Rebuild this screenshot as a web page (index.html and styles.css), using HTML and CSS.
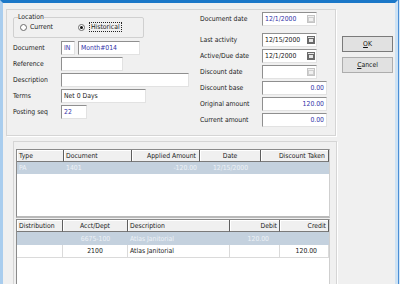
FILE: index.html
```html
<!DOCTYPE html>
<html lang="en">
<head>
  <meta charset="UTF-8" />
  <title>Apply Document</title>
  <link rel="stylesheet" href="styles.css">
</head>
<body>
  <div class="frame">
    <div class="window">
      <div class="main">
        <div class="panel top-panel">
          <div class="left-col">
            <fieldset class="location">
              <legend>Location</legend>
              <div class="radios">
                <span class="radio"></span><span class="radio-text">Current</span>
                <span class="radio checked second"></span><span class="radio-text focus">Historical</span>
              </div>
            </fieldset>

            <div class="form-rows">
              <span class="label">Document</span>
              <div class="pair">
                <span class="field blue w-in">IN</span>
                <span class="field blue w-ref">Month#014</span>
              </div>
              <span class="label">Reference</span>
              <span class="field w-ref"></span>
              <span class="label">Description</span>
              <span class="field w-desc"></span>
              <span class="label">Terms</span>
              <span class="field w-terms">Net 0 Days</span>
              <span class="label">Posting seq</span>
              <span class="field blue w-seq">22</span>
            </div>
          </div>

          <div class="right-col">
            <span class="label first">Document date</span>
            <span class="field date blue first">12/1/2000<span class="cal off"></span></span>
            <span class="label">Last activity</span>
            <span class="field date">12/15/2000<span class="cal"></span></span>
            <span class="label">Active/Due date</span>
            <span class="field date">12/1/2000<span class="cal"></span></span>
            <span class="label">Discount date</span>
            <span class="field date"><span class="cal off"></span></span>
            <span class="label">Discount base</span>
            <span class="field amount blue">0.00</span>
            <span class="label">Original amount</span>
            <span class="field amount blue">120.00</span>
            <span class="label">Current amount</span>
            <span class="field amount blue">0.00</span>
          </div>
        </div>

        <div class="panel bottom-panel">
          <div class="grid grid-apply">
            <div class="row head">
              <span>Type</span>
              <span>Document</span>
              <span class="r">Applied Amount</span>
              <span class="c">Date</span>
              <span class="r">Discount Taken</span>
            </div>
            <div class="row selected">
              <span>PA</span>
              <span>1401</span>
              <span class="r">-120.00</span>
              <span class="c">12/15/2000</span>
              <span></span>
            </div>
          </div>

          <div class="grid grid-dist">
            <div class="row head">
              <span>Distribution</span>
              <span class="c">Acct/Dept</span>
              <span>Description</span>
              <span class="r">Debit</span>
              <span class="r">Credit</span>
            </div>
            <div class="row selected">
              <span></span>
              <span class="c">6675-100</span>
              <span>Atlas Janitorial</span>
              <span class="r num">120.00</span>
              <span class="r num"></span>
            </div>
            <div class="row">
              <span></span>
              <span class="c">2100</span>
              <span>Atlas Janitorial</span>
              <span class="r num"></span>
              <span class="r num">120.00</span>
            </div>
          </div>
        </div>
      </div>

      <div class="side">
        <button class="btn default"><u>O</u>K</button>
        <button class="btn"><u>C</u>ancel</button>
      </div>
    </div>
  </div>
</body>
</html>
```

FILE: styles.css
```css
* {
  box-sizing: border-box;
}

body {
  margin: 0;
  width: 400px;
  height: 284px;
  overflow: hidden;
  background: #d6e7f6;
  font-family: "DejaVu Sans Condensed", "DejaVu Sans", sans-serif;
  font-stretch: semi-condensed;
  font-size: 6.8px;
  color: #1a1a1a;
}

.frame {
  width: 399px;
  height: 284px;
  border-right: 1px solid #4a8ed5;
}

.window {
  display: flex;
  height: 284px;
  background: #f0f0f0;
  border-top: 3px solid #1b78c8;
  border-left: 3px solid #a9cdee;
  border-right: 3px solid #cde2f4;
}

.main {
  width: 334px;
  padding: 6px 0 0 3px;
  display: flex;
  flex-direction: column;
  min-height: 0;
}

.panel {
  border: 1px solid #d5d5d5;
  box-shadow: 1px 1px 0 #fff;
}

/* upper form */
.top-panel {
  flex-shrink: 0;
  width: 330px;
  height: 127px;
  display: flex;
}

.left-col {
  width: 183px;
  padding-left: 6px;
}

.location {
  margin: 3px 0 0;
  padding: 0 4px;
  width: 131px;
  height: 25px;
  border: 1px solid #d0d0d0;
  border-radius: 2px;
}

.location legend {
  padding: 0;
  line-height: 8px;
}

.radios {
  display: flex;
  align-items: center;
  height: 10px;
  margin-top: 1px;
}

.radio {
  width: 7px;
  height: 7px;
  margin-left: 2px;
  border: 1px solid #6b6b6b;
  border-radius: 50%;
  background: #fff;
  display: flex;
  align-items: center;
  justify-content: center;
}

.radio.second {
  margin-left: 25px;
}

.radio.checked::after {
  content: "";
  width: 3px;
  height: 3px;
  border-radius: 50%;
  background: #111;
}

.radio-text {
  margin-left: 3px;
  line-height: 8px;
}

.radio-text.focus {
  margin-left: 4px;
  padding: 0 1px;
  border: 1px dotted #222;
}

.form-rows {
  margin-top: 3px;
  display: grid;
  grid-template-columns: 48px 1fr;
  grid-auto-rows: 14px;
  row-gap: 2px;
  align-items: center;
}

.label {
  white-space: nowrap;
}

.pair {
  display: flex;
  gap: 3px;
}

.field {
  display: flex;
  align-items: center;
  height: 14px;
  padding: 0 2px;
  background: #fff;
  border: 1px solid;
  border-color: #8f8f8f #e2e2e2 #e2e2e2 #8f8f8f;
  white-space: nowrap;
}

.blue {
  color: #3434a8;
}

.w-in { width: 14px; }
.w-ref { width: 62px; }
.w-desc { width: 128px; }
.w-terms { width: 85px; }
.w-seq { width: 26px; }

.right-col {
  margin-top: 2px;
  padding-left: 10px;
  width: 137px;
  display: grid;
  grid-template-columns: 1fr auto;
  grid-template-rows: 19px;
  grid-auto-rows: 14px;
  row-gap: 2px;
  align-items: center;
  align-content: start;
}

.right-col .first {
  align-self: start;
}

.right-col .label.first {
  line-height: 14px;
}

.field.date {
  width: 55px;
  justify-content: space-between;
  padding-right: 1px;
}

.cal {
  width: 8px;
  height: 8px;
  margin-left: auto;
  border: 1px solid #6a6a6a;
  background: #e6e6e6;
  display: flex;
  align-items: center;
  justify-content: center;
}

.cal::after {
  content: "";
  width: 4px;
  height: 3px;
  border: 1px solid #6a6a6a;
}

.cal.off {
  border-color: #c4c4c4;
  background: #f0f0f0;
}

.cal.off::after {
  border-color: #cfcfcf;
}

.field.amount {
  width: 65px;
  justify-content: flex-end;
}

/* buttons */
.side {
  padding: 33px 0 0 5px;
  display: flex;
  flex-direction: column;
  gap: 5px;
}

.btn {
  width: 51px;
  height: 16px;
  padding: 0;
  font-family: inherit;
  font-stretch: inherit;
  font-size: inherit;
  color: #111;
  background: #e1e1e1;
  border: 1px solid #adadad;
}

.btn.default {
  border-color: #7a7a7a;
}

/* grids */
.bottom-panel {
  margin: 5px 0 0 7px;
  width: 324px;
  flex: 1;
  min-height: 0;
  border-bottom: none;
  padding: 7px 0 0 2px;
  display: flex;
  flex-direction: column;
}

.grid {
  flex-shrink: 0;
  width: 314px;
  background: #fff;
  border: 1px solid #8a8a8a;
  border-right-color: #cfcfcf;
}

.grid-apply {
  height: 69px;
  border-bottom: 2px solid #b9b9b9;
}

.grid-dist {
  margin-top: 1px;
  flex: 1;
  border-bottom: none;
}

.row {
  display: grid;
  height: 13px;
  align-items: center;
}

.grid-apply .row {
  grid-template-columns: 47px 68px 68px 61px 1fr;
}

.grid-dist .row {
  grid-template-columns: 46px 65px 102px 50px 1fr;
}

.row span {
  height: 100%;
  display: flex;
  align-items: center;
  padding: 0 2px;
  white-space: nowrap;
  overflow: hidden;
}

.row .r {
  justify-content: flex-end;
}

.row .c {
  justify-content: center;
}

.row.head {
  height: 12px;
  background: #f0f0f0;
}

.row.head span {
  border-right: 1px solid #5e5e5e;
  border-bottom: 1px solid #7a7a7a;
  box-shadow: inset 1px 1px 0 #fff;
}

.row.selected {
  background: #c4d1de;
  color: #eef2f7;
}

.grid-apply .row.selected {
  height: 12px;
}

.grid-dist .row:not(.head):not(.selected) span {
  border-right: 1px solid #dadada;
  border-bottom: 1px solid #dadada;
}

.row .num {
  padding-right: 11px;
}

.grid-apply .row .r {
  padding-right: 3px;
}
```
